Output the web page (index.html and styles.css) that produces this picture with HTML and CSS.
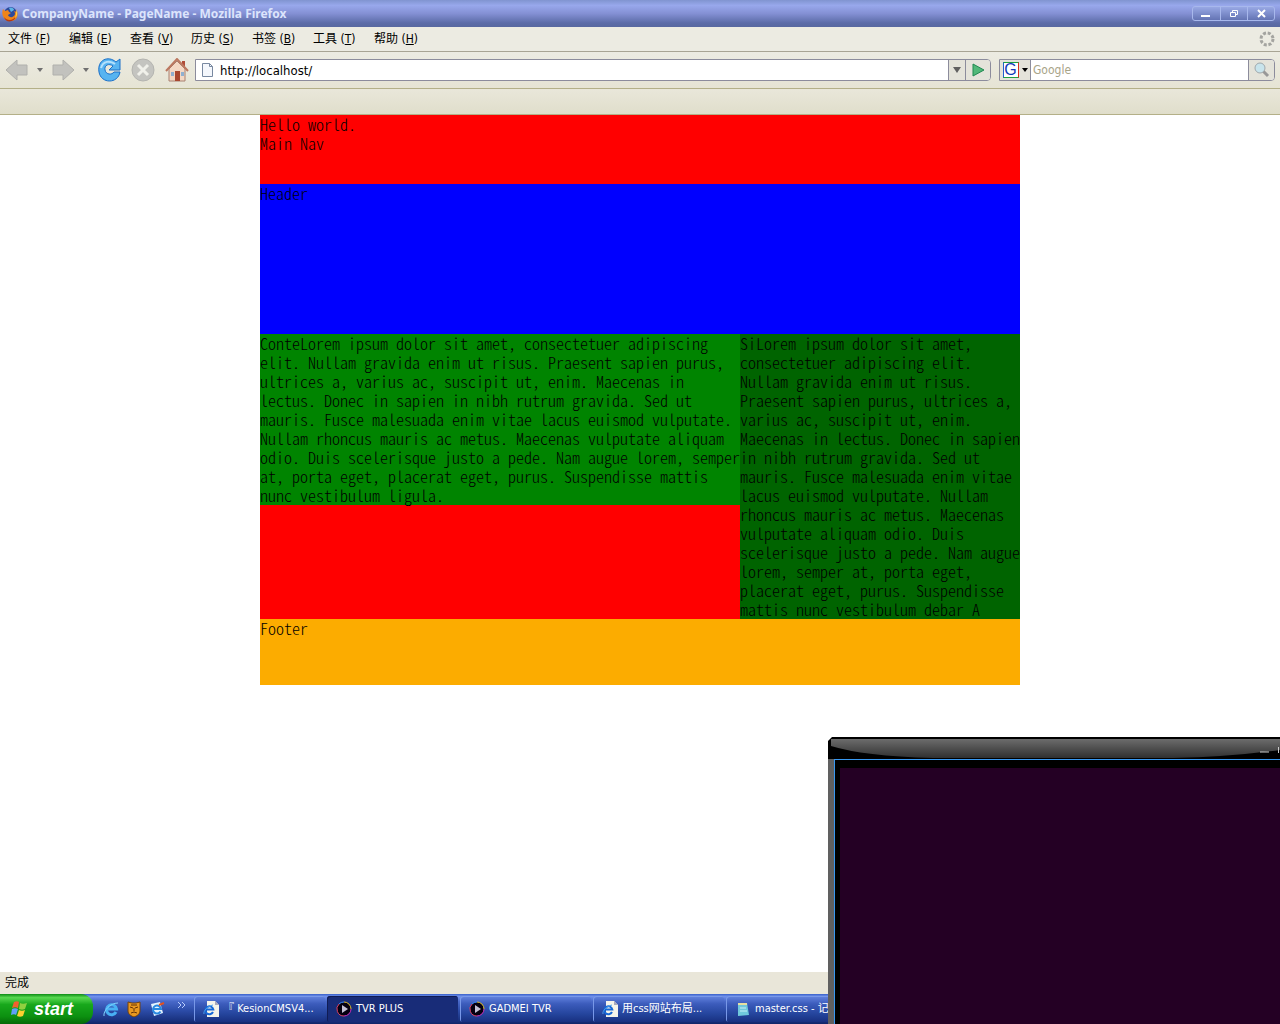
FILE: index.html
```html
<!DOCTYPE html>
<html lang="zh-CN">
<head>
<meta charset="utf-8">
<title>CompanyName - PageName - Mozilla Firefox</title>
<link rel="stylesheet" href="styles.css">
</head>
<body>
<svg class="defs" aria-hidden="true">
  <symbol id="ie-page" viewBox="0 0 16 16">
    <path d="M4 0h8l4 4v12H4z" fill="#f6f4ea"/><path d="M12 0v4h4" fill="#aab"/>
    <path d="M10 11a4 4 0 1 1 .3-2.500H4" fill="none" stroke="#1668d8" stroke-width="2"/>
    <path d="M1 13C0 10 5 5 10 4" fill="none" stroke="#4aa0f0" stroke-width="1"/>
  </symbol>
  <symbol id="player" viewBox="0 0 16 16">
    <circle cx="8" cy="8" r="7" fill="#050010"/>
    <path d="M3 3a7 7 0 0 1 5-2" stroke="#3a8cff" fill="none"/>
    <path d="M8 1a7 7 0 0 1 7 7" stroke="#e0c030" fill="none"/>
    <path d="M15 8a7 7 0 0 1-7 7" stroke="#d030c0" fill="none"/>
    <path d="M8 15A7 7 0 0 1 3 3" stroke="#e04060" fill="none"/>
    <path d="M6 4l6 4-6 4z" fill="#c4c0d4"/>
  </symbol>
</svg>

<header class="titlebar">
  <svg class="icon" viewBox="0 0 16 16"><circle cx="8.500" cy="7.500" r="6.500" fill="#2c4a9c"/><path d="M7 2c2-1 5 0 5 2L9 6z" fill="#5cb4e4"/><path d="M1 3l2 2 3-1 1 2 2 1-3 2c1 3 6 3 7-1 0-2-1-3-1-3l3 1-1-3c3 4 2 12-5 12C1 15-1 8 1 3z" fill="#f08418"/><path d="M2 11c3 4 9 4 12-1-1 6-10 8-12 1z" fill="#b83a10"/><path d="M14 4c2 3 1 7-1 8l1-4z" fill="#fcd040"/></svg>
  <h1>CompanyName - PageName - Mozilla Firefox</h1>
  <div class="controls">
    <button aria-label="Minimize"><svg viewBox="0 0 26 14"><path d="M8 9h9" stroke="#fff" stroke-width="2"/></svg></button>
    <button aria-label="Restore"><svg viewBox="0 0 26 14"><path d="M11.500 5V3.500h5v4H15M9.500 5.500h5v4h-5z" stroke="#fff" fill="none"/></svg></button>
    <button aria-label="Close"><svg viewBox="0 0 26 14"><path d="M10 3l7 7M17 3l-7 7" stroke="#fff" stroke-width="2"/></svg></button>
  </div>
</header>

<nav class="menubar">
  <div class="menus">
    <button>文件 (<u>F</u>)</button>
    <button>编辑 (<u>E</u>)</button>
    <button>查看 (<u>V</u>)</button>
    <button>历史 (<u>S</u>)</button>
    <button>书签 (<u>B</u>)</button>
    <button>工具 (<u>T</u>)</button>
    <button>帮助 (<u>H</u>)</button>
  </div>
  <svg class="icon" viewBox="0 0 16 16"><circle cx="8" cy="8" r="6" fill="none" stroke="#a4a4a0" stroke-width="3" stroke-dasharray="3 1.712"/></svg>
</nav>

<div class="toolbar">
  <div class="tools">
    <button aria-label="Back"><svg viewBox="0 0 24 24"><path d="M1 12L12 2v5h10v10H12v5z" fill="#c2c2be" stroke="#b0b0ac"/></svg></button>
    <button class="caret" aria-label="Back history"><svg viewBox="0 0 6 4"><path d="M0 0h6L3 4z" fill="#707070"/></svg></button>
    <button aria-label="Forward"><svg viewBox="0 0 24 24"><path d="M23 12L12 2v5H2v10h10v5z" fill="#c2c2be" stroke="#b0b0ac"/></svg></button>
    <button class="caret" aria-label="Forward history"><svg viewBox="0 0 6 4"><path d="M0 0h6L3 4z" fill="#707070"/></svg></button>
    <button aria-label="Reload"><svg viewBox="0 0 24 24"><path d="M19 4l4-3v11H12l4-4C12 5 7 7 8 12c1 5 7 5 9 2h6c-2 12-19 12-21 0C0 2 11-3 19 4z" fill="#58b4f0" stroke="#1c70c8"/><path d="M4 10C6 3 13 2 18 6" fill="none" stroke="#b4e0fc" stroke-width="2"/></svg></button>
    <button class="wide" aria-label="Stop"><svg viewBox="0 0 24 24"><circle cx="12" cy="12" r="11" fill="#c4c4c0" stroke="#b4b4b0"/><path d="M7 7l10 10M17 7L7 17" stroke="#f0f0ea" stroke-width="3"/></svg></button>
    <button aria-label="Home"><svg viewBox="0 0 24 24"><path d="M17 3h3v6h-3z" fill="#b04c38"/><path d="M4 11l8-8 8 8v12H4z" fill="#f4d8c4" stroke="#a88070"/><path d="M1 13L12 1l11 12" fill="none" stroke="#bc7860" stroke-width="2"/><path d="M10 13h5v10h-5z" fill="#a84830"/><path d="M6 14h3v4H6zM16 14h3v4h-3z" fill="#90b0d0"/></svg></button>
  </div>
  <form class="address">
    <label for="url"><svg class="icon" viewBox="0 0 16 16"><path d="M3.500 1.500h7l3 3v10h-10z" fill="#f4f7fc" stroke="#7888a0"/><path d="M10.500 1.500v3h3" fill="none" stroke="#7888a0"/></svg></label>
    <input id="url" type="text" value="http://localhost/">
    <button type="button" class="drop" aria-label="Address history"><svg viewBox="0 0 8 6"><path d="M0 0h8L4 6z" fill="#606060"/></svg></button>
    <button type="button" class="go" aria-label="Go"><svg viewBox="0 0 14 14"><path d="M2 1l11 6-11 6z" fill="#50b878" stroke="#208850"/></svg></button>
  </form>
  <form class="search">
    <button type="button" class="engine" aria-label="Search engine"><span class="g">G</span><svg viewBox="0 0 6 4"><path d="M0 0h6L3 4z"/></svg></button>
    <input type="text" aria-label="Search" placeholder="Google">
    <button type="button" class="find" aria-label="Find"><svg viewBox="0 0 16 16"><path d="M9 9l5 5" stroke="#989898" stroke-width="3"/><circle cx="6" cy="6" r="5" fill="#c8e4ec" stroke="#a0a8ac"/></svg></button>
  </form>
</div>
<div class="bookmarks"></div>

<main class="viewport">
  <div class="page">
    <div>Hello world.</div>
    <div class="main-nav">Main Nav</div>
    <div class="banner">Header</div>
    <div class="columns">
      <div class="content">ConteLorem ipsum dolor sit amet, consectetuer adipiscing<br>elit. Nullam gravida enim ut risus. Praesent sapien purus,<br>ultrices a, varius ac, suscipit ut, enim. Maecenas in<br>lectus. Donec in sapien in nibh rutrum gravida. Sed ut<br>mauris. Fusce malesuada enim vitae lacus euismod vulputate.<br>Nullam rhoncus mauris ac metus. Maecenas vulputate aliquam<br>odio. Duis scelerisque justo a pede. Nam augue lorem, semper<br>at, porta eget, placerat eget, purus. Suspendisse mattis<br>nunc vestibulum ligula.</div>
      <div class="side">SiLorem ipsum dolor sit amet,<br>consectetuer adipiscing elit.<br>Nullam gravida enim ut risus.<br>Praesent sapien purus, ultrices a,<br>varius ac, suscipit ut, enim.<br>Maecenas in lectus. Donec in sapien<br>in nibh rutrum gravida. Sed ut<br>mauris. Fusce malesuada enim vitae<br>lacus euismod vulputate. Nullam<br>rhoncus mauris ac metus. Maecenas<br>vulputate aliquam odio. Duis<br>scelerisque justo a pede. Nam augue<br>lorem, semper at, porta eget,<br>placerat eget, purus. Suspendisse<br>mattis nunc vestibulum debar A</div>
    </div>
    <div class="foot">Footer</div>
  </div>
</main>

<div class="status">完成</div>

<footer class="taskbar">
  <button class="start"><svg viewBox="0 0 18 18"><path d="M4 2c2-1 4-1 5 0L8 8C6 7 4 7 2 8z" fill="#f06030"/><path d="M10 3c2 1 4 1 7 0l-2 6c-2 1-4 1-6 0z" fill="#90d040"/><path d="M2 9c2-1 4-1 6 0l-2 6c-1-1-3-1-5 0z" fill="#60a0f8"/><path d="M9 10c2 1 4 1 6 0l-2 6c-2 1-4 1-6 0z" fill="#fcd030"/></svg>start</button>
  <div class="quick">
    <button aria-label="Internet Explorer"><svg viewBox="0 0 16 16"><path d="M13 11a5 5 0 1 1 .5-3H5" fill="none" stroke="#48b0f4" stroke-width="3"/><path d="M1 15C0 10 7 2 15 2" fill="none" stroke="#80d0fc"/></svg></button>
    <button aria-label="Shield"><svg viewBox="0 0 16 16"><path d="M2 1l4 1h4l4-1v9c0 3-3 5-6 6-3-1-6-3-6-6z" fill="#e89820" stroke="#704010"/><path d="M4 6l3 1M12 6L9 7M8 7v3M5 12l3-1 3 1M5 4h6" stroke="#603008" fill="none"/></svg></button>
    <button aria-label="Outlook Express"><svg viewBox="0 0 16 16"><path d="M2 3l9-2 3 11-9 3z" fill="#e4f4ff"/><path d="M11.500 10.500a4 4 0 1 1 .5-2.500H5" fill="none" stroke="#2888e0" stroke-width="2"/><path d="M10 4l5-2" stroke="#e05020" stroke-width="2"/></svg></button>
    <button class="more" aria-label="More"><svg viewBox="0 0 10 8"><path d="M1 1l3 3-3 3M5 1l3 3-3 3" fill="none" stroke="#b8ccfc"/></svg></button>
  </div>
  <div class="tasks">
    <button><svg><use href="#ie-page"/></svg>『 KesionCMSV4...</button>
    <button class="active"><svg><use href="#player"/></svg>TVR PLUS</button>
    <button><svg><use href="#player"/></svg>GADMEI TVR</button>
    <button><svg><use href="#ie-page"/></svg>用css网站布局...</button>
    <button><svg viewBox="0 0 16 16"><path d="M3 2h9l2 12-11 1z" fill="#70c8dc"/><path d="M3 2h9v2H3z" fill="#e8e0a0"/><path d="M5 7h6M5 10h7" stroke="#c8f0f8"/></svg>master.css - 记</button>
  </div>
</footer>

<section class="player" aria-label="TVR PLUS">
  <svg class="player-top" viewBox="0 0 452 22" preserveAspectRatio="none">
    <defs><linearGradient id="metal" x2="0" y2="1"><stop offset="0" stop-color="#6c6c6c"/><stop offset="1" stop-color="#303030"/></linearGradient></defs>
    <path d="M0 22V4L4 0h448v22z"/><path d="M3 2h449v11Q400 20 345 21H105Q35 19 3 9z" fill="url(#metal)"/>
    <path d="M432 15h9M450.500 10v6" stroke="#ccc"/>
  </svg>
  <div class="screen"></div>
</section>
</body>
</html>
```
FILE: styles.css
```css
* { box-sizing: border-box; }
body {
  margin: 0;
  min-height: 100vh;
  display: flex;
  flex-direction: column;
  position: relative;
  overflow: hidden;
  background: #fff;
  color: #000;
  font: 12px/16px "DejaVu Sans Condensed", "Noto Sans CJK SC", sans-serif;
}
button, input {
  margin: 0;
  padding: 0;
  border: 0;
  background: none;
  font: inherit;
  color: inherit;
}
svg { display: block; flex: none; }
.defs { position: absolute; width: 0; height: 0; }
.icon { width: 16px; height: 16px; }

.titlebar {
  height: 27px;
  display: flex;
  align-items: center;
  gap: 4px;
  padding: 0 5px 0 2px;
  background: linear-gradient(#8094d0, #98a8ec 20%, #8490d4 50%, #5c6ca8 85%, #5868a0);
}
.titlebar h1 {
  flex: 1;
  margin: 0;
  color: #dce4fc;
  font: bold 12px/16px "Noto Sans", sans-serif;
}
.controls {
  display: flex;
  border: 1px solid #a8b8ec;
  border-radius: 3px;
  background: linear-gradient(#98a8e4, #6474b4);
}
.controls button { width: 27px; height: 13px; }
.controls button + button { border-left: 1px solid #a8b8ec; }
.controls svg { width: 26px; height: 14px; }

.menubar {
  height: 25px;
  display: flex;
  align-items: center;
  justify-content: space-between;
  padding: 0 5px 0 8px;
  background: #ecebe2;
  border-bottom: 1px solid #a8a494;
}
.menus { display: grid; grid-template-columns: repeat(7, 61px); }
.menus button { text-align: left; white-space: nowrap; }

.toolbar {
  height: 37px;
  display: flex;
  align-items: center;
  gap: 8px;
  padding: 0 5px;
  background: linear-gradient(#ecebe2, #e6e4d4);
  border-bottom: 1px solid #b4b088;
}
.tools { display: flex; align-items: center; gap: 8px; width: 182px; }
.tools button { width: 24px; }
.tools .caret { width: 6px; }
.tools .wide { width: 28px; padding: 0 2px; }
.tools svg { width: 24px; height: 24px; }
.tools .caret svg { width: 6px; height: 4px; }
.address, .search {
  display: flex;
  align-items: center;
  height: 22px;
  border: 1px solid #8c8c9c;
  border-radius: 0 4px 4px 0;
  background: #fff;
  overflow: hidden;
}
.address { flex: 1; }
.address label { padding: 0 5px 0 3px; }
.address input, .search input { flex: 1; min-width: 0; height: 20px; }
.address input { font-size: 13px; }
.address button, .search button {
  height: 20px;
  display: flex;
  align-items: center;
  justify-content: center;
  background: #e4e3da;
  border-left: 1px solid #8c8c9c;
}
.address .drop { width: 17px; }
.drop svg { width: 8px; height: 6px; }
.address .go { width: 25px; }
.go svg { width: 14px; height: 14px; }
.search { width: 276px; }
.search input { padding-left: 2px; }
.search input::placeholder { color: #a8a488; opacity: 1; }
.search .engine { width: 31px; gap: 3px; border-left: 0; border-right: 1px solid #8c8c9c; }
.g {
  width: 16px;
  height: 16px;
  border: 1px solid;
  border-color: #20a040 #d83020 #20a040 #2060d0;
  background: #fff;
  color: #1038b8;
  font: 16px/14px "Liberation Sans", sans-serif;
}
.engine svg { width: 6px; height: 4px; }
.search .find { width: 26px; }
.find svg { width: 16px; height: 16px; }
.bookmarks {
  height: 26px;
  background: linear-gradient(#e9e7da, #e0decb);
  border-bottom: 1px solid #b4b088;
}

.viewport { flex: 1; }
.page {
  max-width: 760px;
  margin: 0 auto;
  background: #f00;
  font: 300 16px/19px "Noto Sans CJK SC", monospace;
  font-feature-settings: "hwid";
}
.main-nav { height: 50px; }
.banner { height: 150px; background: #00f; }
.columns { display: grid; grid-template-columns: 12fr 7fr; align-items: start; white-space: nowrap; }
.content { background: #008400; }
.side { background: #006400; }
.foot { height: 66px; background: #fcac00; }

.status {
  height: 22px;
  padding: 3px 5px;
  background: #e9e6d9;
}

.taskbar {
  height: 30px;
  display: flex;
  align-items: center;
  color: #fff;
  font-size: 11px;
  background: linear-gradient(#3860c8, #7090ec 8%, #4868c8 25%, #2c4ca8 55%, #18307c 90%, #102468);
}
.start {
  width: 93px;
  height: 30px;
  display: flex;
  align-items: center;
  gap: 6px;
  padding-left: 10px;
  border-radius: 0 12px 12px 0;
  background: linear-gradient(#0c8c14, #58d850 12%, #18a81c 35%, #0c9010 75%, #066808);
  font: italic bold 18px/24px "Liberation Sans", sans-serif;
}
.start svg { width: 18px; height: 18px; }
.quick { display: flex; gap: 7px; width: 101px; padding-left: 10px; }
.quick svg { width: 16px; height: 16px; }
.quick .more { padding: 0 0 8px 5px; }
.quick .more svg { width: 10px; height: 8px; }
.tasks { display: flex; gap: 2px; }
.tasks button {
  width: 131px;
  height: 26px;
  display: flex;
  align-items: center;
  gap: 4px;
  padding-left: 9px;
  border-radius: 3px;
  background: linear-gradient(#6484e0, #3c5cbc 30%, #24449c 70%, #183080);
  box-shadow: inset 1px 1px #7898e8;
  white-space: nowrap;
}
.tasks svg { width: 16px; height: 16px; }
.tasks .active { background: #182c78; box-shadow: inset 1px 1px #101c54; }

/* Media player window floating above the browser */
.player {
  position: absolute;
  right: 0;
  bottom: 0;
  width: 452px;
  height: 287px;
  display: flex;
  flex-direction: column;
}
.player-top { width: 100%; height: 22px; }
.screen {
  flex: 1;
  border-left: 6px solid #606060;
  background: #000;
  padding: 9px 0 0 6px;
  box-shadow: inset 1px 1px #3898f0;
}
.screen::before { content: ""; display: block; height: 100%; background: #240024; }
```
